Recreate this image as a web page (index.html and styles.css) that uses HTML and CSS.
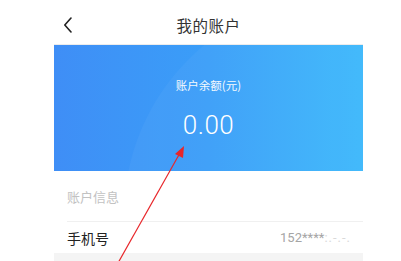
FILE: index.html
```html
<!DOCTYPE html>
<html lang="zh">
<head>
<meta charset="utf-8">
<link rel="stylesheet" href="styles.css">
</head>
<body>
<div class="phone">
  <header class="header">
    <svg class="back" width="10" height="16" viewBox="0 0 10 16"><path d="M8 1 L1.8 8 L8 15" fill="none" stroke="#222" stroke-width="1.6" stroke-linecap="round" stroke-linejoin="round"/></svg>
    <div class="title">我的账户</div>
    <div></div>
  </header>
  <section class="card">
    <div class="card-label">账户余额(元)</div>
    <div class="card-amount">0.00</div>
  </section>
  <section class="info">
    <div class="info-head">账户信息</div>
    <div class="row">
      <span class="row-label">手机号</span>
      <span class="row-value">152****<span class="blur">:.-.-.</span></span>
    </div>
  </section>
  <div class="band"></div>
</div>
<svg class="arrow" width="401" height="261" viewBox="0 0 401 261">
  <line x1="118" y1="263" x2="180" y2="153" stroke="#e8262a" stroke-width="1.2"/>
  <polygon points="184,146 175,154 183,158" fill="#e8262a"/>
</svg>
</body>
</html>
```
FILE: styles.css
```css
html, body { margin: 0; padding: 0; background: #fff; }
body {
  font-family: "Noto Sans CJK SC", "Noto Sans", sans-serif;
  width: 401px; height: 261px; overflow: hidden; position: relative;
}
.phone { margin-left: 54px; width: 309px; }
.header {
  height: 44px;
  border-bottom: 1px solid #ececec;
  display: grid;
  grid-template-columns: 1fr auto 1fr;
  align-items: center;
}
.back { margin-left: 9px; margin-top: 6px; }
.title { font-size: 15.5px; color: #333; letter-spacing: 0.5px; margin-top: 5px; }
.card {
  height: 126px;
  position: relative;
  overflow: hidden;
  background: linear-gradient(90deg, #3f8ef6 0%, #3a9ef8 50%, #3cb8fb 100%);
  display: flex; flex-direction: column; align-items: center;
  color: #fff;
}
.card::before {
  content: ""; position: absolute;
  width: 440px; height: 440px; border-radius: 50%;
  left: 70px; top: -50px;
  background: rgba(255,255,255,0.04);
}
.card-label { font-size: 11.5px; margin-top: 32px; position: relative; opacity: 0.95; }
.card-amount {
  font-family: Roboto, "Noto Sans", sans-serif; font-weight: 300;
  font-size: 26px; margin-top: 17px; position: relative; letter-spacing: 0.5px;
}
.info { padding-left: 13px; }
.info-head {
  height: 50px; display: flex; align-items: center;
  font-size: 13px; color: #c2c2c2; border-bottom: 1px solid #f0f0f0;
}
.row {
  height: 31px; display: flex; align-items: center; justify-content: space-between;
  padding-right: 12px;
}
.row-label { font-size: 14px; color: #222; }
.row-value { font-family: Roboto, "Noto Sans", sans-serif; font-size: 13px; color: #a5a5a5; }
.blur { color: #d9d9d9; letter-spacing: 1px; }
.band { height: 10px; background: #f4f4f4; }
.arrow { position: absolute; left: 0; top: 0; pointer-events: none; }
```
